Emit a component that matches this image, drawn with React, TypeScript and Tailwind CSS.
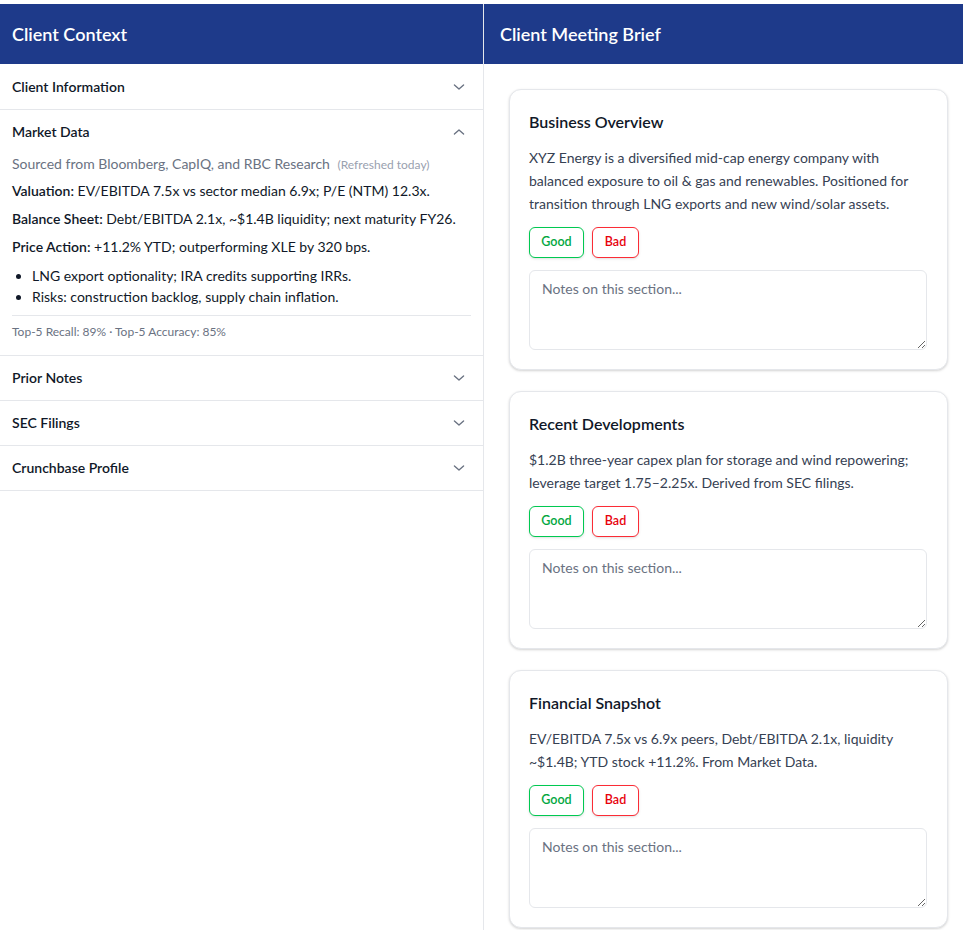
import React from "react";

const Chevron = ({ up = false }: { up?: boolean }) => (
  <svg
    width="20"
    height="20"
    viewBox="0 0 24 24"
    fill="none"
    stroke="currentColor"
    strokeWidth="1.6"
    strokeLinecap="round"
    strokeLinejoin="round"
    className={up ? "text-gray-500 rotate-180" : "text-gray-500"}
  >
    <path d="m6.5 9.5 5.5 5 5.5-5" />
  </svg>
);

const AccordionHeader = ({
  title,
  open = false,
  tall = false,
}: {
  title: string;
  open?: boolean;
  tall?: boolean;
}) => (
  <div className={tall ? "flex h-[45px] items-center justify-between px-3" : "flex h-[44px] items-center justify-between px-3"}>
    <span className="text-sm font-semibold text-gray-900">{title}</span>
    <span className="mr-[2px]">
      <Chevron up={open} />
    </span>
  </div>
);

const Card = ({ title, body }: { title: string; body: string }) => (
  <div className="rounded-xl border border-gray-200 bg-white pt-5 pr-5 pb-[19px] pl-[19px] shadow-[0_1px_3px_rgba(0,0,0,0.12),0_1px_2px_rgba(0,0,0,0.06)]">
    <h3 className="text-base leading-6 font-semibold text-gray-900">{title}</h3>
    <p className="mt-3 text-sm leading-[23px] text-gray-700">{body}</p>
    <div className="mt-3 flex gap-2">
      <button className="h-[31px] w-[55px] rounded-md border border-green-500 bg-white text-[12.5px] font-semibold text-green-600 shadow-sm">
        Good
      </button>
      <button className="h-[31px] w-[47px] rounded-md border border-red-500 bg-white text-[12.5px] font-semibold text-red-600 shadow-sm">
        Bad
      </button>
    </div>
    <textarea
      className="mt-3 block h-20 w-full rounded-md border border-gray-200 px-3 py-2 text-sm leading-5 text-gray-700 placeholder:text-gray-500"
      placeholder="Notes on this section..."
    />
  </div>
);

export default function App() {
  return (
    <div
      className="flex h-[930px] w-full overflow-hidden bg-white pt-1"
      style={{ fontFamily: 'Lato, "Noto Sans", sans-serif' }}
    >
      <aside className="flex w-[484px] shrink-0 flex-col border-r border-gray-200">
        <div className="flex h-[60px] items-center bg-[#1e3a8a] px-3">
          <h1 className="text-lg font-semibold text-white">Client Context</h1>
        </div>
        <div className="border-b border-gray-200">
          <AccordionHeader title="Client Information" tall />
        </div>
        <div className="border-b border-gray-200">
          <AccordionHeader title="Market Data" open />
          <div className="px-3 pb-[15px] text-sm leading-5 text-gray-900">
            <p className="mb-[7px] text-gray-500">
              Sourced from Bloomberg, CapIQ, and RBC Research{" "}
              <span className="ml-1 text-xs text-gray-400">(Refreshed today)</span>
            </p>
            <p className="mb-2">
              <span className="font-semibold">Valuation:</span> EV/EBITDA 7.5x vs sector median 6.9x; P/E (NTM) 12.3x.
            </p>
            <p className="mb-2">
              <span className="font-semibold">Balance Sheet:</span> Debt/EBITDA 2.1x, ~$1.4B liquidity; next maturity FY26.
            </p>
            <p className="mb-2">
              <span className="font-semibold">Price Action:</span> +11.2% YTD; outperforming XLE by 320 bps.
            </p>
            <ul className="list-disc pl-5 leading-[21px]">
              <li>LNG export optionality; IRA credits supporting IRRs.</li>
              <li>Risks: construction backlog, supply chain inflation.</li>
            </ul>
            <div className="mt-2 border-t border-gray-200 pt-2 text-xs leading-4 text-gray-500">
              Top-5 Recall: 89% · Top-5 Accuracy: 85%
            </div>
          </div>
        </div>
        <div className="border-b border-gray-200">
          <AccordionHeader title="Prior Notes" />
        </div>
        <div className="border-b border-gray-200">
          <AccordionHeader title="SEC Filings" />
        </div>
        <div className="border-b border-gray-200">
          <AccordionHeader title="Crunchbase Profile" />
        </div>
      </aside>
      <main className="flex min-w-0 flex-1 flex-col">
        <div className="flex h-[60px] shrink-0 items-center bg-[#1e3a8a] px-4">
          <h1 className="text-lg font-semibold text-white">Client Meeting Brief</h1>
        </div>
        <div className="flex flex-col gap-[21px] pt-[25px] pr-[15px] pl-[25px]">
          <Card
            title="Business Overview"
            body="XYZ Energy is a diversified mid-cap energy company with balanced exposure to oil & gas and renewables. Positioned for transition through LNG exports and new wind/solar assets."
          />
          <Card
            title="Recent Developments"
            body="$1.2B three-year capex plan for storage and wind repowering; leverage target 1.75–2.25x. Derived from SEC filings."
          />
          <Card
            title="Financial Snapshot"
            body="EV/EBITDA 7.5x vs 6.9x peers, Debt/EBITDA 2.1x, liquidity ~$1.4B; YTD stock +11.2%. From Market Data."
          />
        </div>
      </main>
    </div>
  );
}
